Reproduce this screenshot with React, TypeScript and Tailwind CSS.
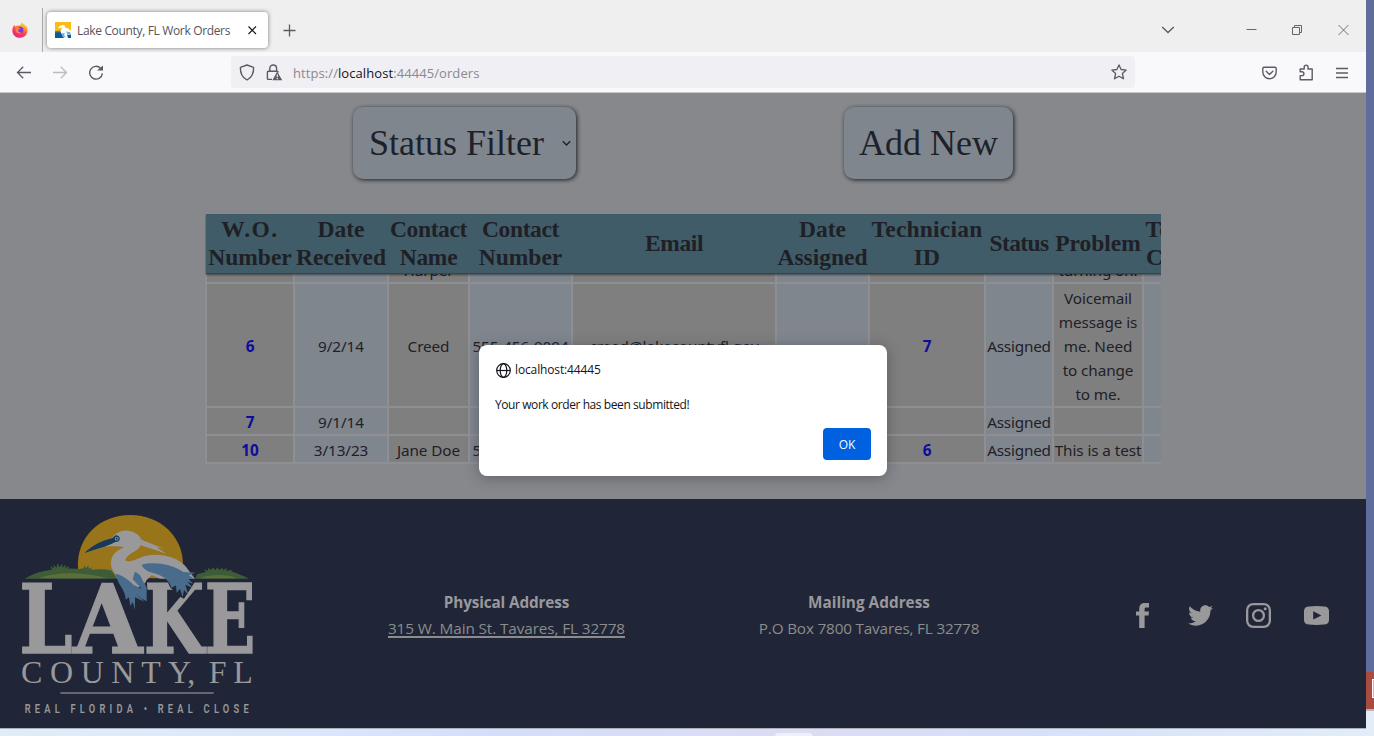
import React from "react";
import { FaTwitter } from "react-icons/fa";

const COLS =
  "grid grid-cols-[86px_92px_79px_101px_202px_91px_114px_66px_88px_114px] gap-x-[2px]";

const headers: { lines: string[]; cls: string }[] = [
  { lines: ["W.O.", "Number"], cls: "" },
  { lines: ["Date", "Received"], cls: "" },
  { lines: ["Contact", "Name"], cls: "tracking-[-0.3px]" },
  { lines: ["Contact", "Number"], cls: "" },
  { lines: ["Email"], cls: "tracking-[-0.4px]" },
  { lines: ["Date", "Assigned"], cls: "" },
  { lines: ["Technician", "ID"], cls: "tracking-[0.2px]" },
  { lines: ["Status"], cls: "tracking-[-0.6px]" },
  { lines: ["Problem"], cls: "" },
  { lines: ["Technician", "Comments"], cls: "tracking-[0.2px]" },
];

const rows = [
  {
    h: "h-[122px]",
    cells: ["6", "9/2/14", "Creed", "555-456-9094", "creed@lakecountyfl.gov", "", "7", "Assigned", "Voicemail message is me. Need to change to me.", ""],
  },
  { h: "h-[26px]", cells: ["7", "9/1/14", "", "", "", "", "", "Assigned", "", ""] },
  { h: "h-[26px]", cells: ["10", "3/13/23", "Jane Doe", "555-555-5555", "", "", "6", "Assigned", "This is a test", ""] },
];

function FirefoxIcon() {
  return (
    <svg width="16" height="16" viewBox="0 0 16 16">
      <defs>
        <linearGradient id="ff" x1="0.8" y1="0" x2="0.3" y2="1">
          <stop offset="0" stopColor="#fff14a" />
          <stop offset="0.3" stopColor="#ffa02a" />
          <stop offset="0.6" stopColor="#ff4050" />
          <stop offset="1" stopColor="#e02090" />
        </linearGradient>
      </defs>
      <path d="M10 0.2 C11 2 13.5 2.6 15 5 C16.6 9 14.8 15.6 8 15.8 C2.6 15.8 0 11.6 .4 7.6 C.6 5.6 1.4 4 2.4 3 L3.2 4.6 C4.6 3.4 6.6 3.2 8.4 3.6 C8.6 2.2 9 1 10 .2 Z" fill="url(#ff)" />
      <circle cx="8.2" cy="8" r="3.2" fill="#7a3be0" />
      <path d="M3.4 5.2 C5 4.6 6.6 5 7.4 6 L8.4 6.4 C7.8 7.2 6.6 7.2 6.2 8 C5.8 9.4 7.6 11 9.8 10.4 C8 12.4 3.6 11.6 3.4 8 Z" fill="#ff8040" />
    </svg>
  );
}

function Favicon() {
  return (
    <svg width="16" height="16" viewBox="0 0 16 16">
      <rect width="16" height="16" fill="#fdbb16" />
      <path d="M0 9.6 L7 9 L8 12 L16 12 V16 H0Z" fill="#0f5a94" />
      <path d="M0 9 L6 8.6 L7 10 L0 10.6Z" fill="#6d8a3a" />
      <path d="M3 6.2 C4 4.6 6 2.6 8.4 3 C10.4 3.6 10.4 5 9.6 6 C12 5.2 14.4 7 16 9 V13 L12 12.4 L13 16 H9 L6 11 C5 9 6 7.4 7.4 5.8 C6 5.4 4.4 5.8 3 6.2Z" fill="#fff" />
      <path d="M7 11 L10 11.4 L9 13 L11 15.4 L7.4 14.4Z M11 9.6 L15 10 L16 13 L12.6 12Z" fill="#69aee0" />
    </svg>
  );
}

function TabBar() {
  return (
    <div className="flex h-[52px] bg-[#efefef]">
      <div className="flex w-[43px] shrink-0 items-start border-r border-[#a9a9a9] pl-3 pt-[14px] mt-2">
        <FirefoxIcon />
      </div>
      <div className="ml-[4px] mt-3 flex h-9 w-[221px] items-center rounded bg-white pl-2 pr-[10px] shadow-[0_0_4px_rgba(0,0,0,0.5)]">
        <Favicon />
        <span className="ml-[6px] mt-px whitespace-nowrap text-[12px] tracking-[-0.34px] text-[#55545c]">Lake County, FL Work Orders</span>
        <svg className="ml-auto" width="11" height="11" viewBox="0 0 11 11" stroke="#15141a" strokeWidth="1.1">
          <path d="M1.5 1.5 L9 9 M9 1.5 L1.5 9" />
        </svg>
      </div>
      <svg className="ml-[15px] mt-6" width="13" height="13" viewBox="0 0 13 13" stroke="#5b5b66" strokeWidth="1.3">
        <path d="M6.5 0.5 V12.5 M0.5 6.5 H12.5" />
      </svg>
      <div className="ml-auto flex items-start pr-[17px] pt-6">
        <svg className="mr-[71px] mt-px" width="14" height="10" viewBox="0 0 14 10" fill="none" stroke="#5b5b66" strokeWidth="1.4">
          <path d="M1.2 2 L7 7.6 L12.8 2" />
        </svg>
        <svg className="mr-[35px]" width="11" height="12" viewBox="0 0 11 12" stroke="#666" strokeWidth="1">
          <path d="M0.5 5.5 H10.5" />
        </svg>
        <svg className="mr-[35px]" width="11" height="12" viewBox="0 0 11 12" fill="none" stroke="#666" strokeWidth="1">
          <path d="M0.5 3.5 H7.5 V10.5 H0.5 Z M2.5 3.5 V1.5 H9.5 V8.5 H7.5" />
        </svg>
        <svg width="11" height="12" viewBox="0 0 11 12" stroke="#666" strokeWidth="0.9">
          <path d="M0.5 1 L10.5 11 M10.5 1 L0.5 11" />
        </svg>
      </div>
    </div>
  );
}

function NavBar() {
  return (
    <div className="flex h-[41px] items-start border-b border-[#c9c9cb] bg-[#f9f9fb] pt-1 text-[#5b5b66]">
      <svg className="ml-4 mt-2" width="16" height="17" viewBox="0 0 16 17" fill="none" stroke="currentColor" strokeWidth="1.3">
        <path d="M15 8.5 H1.6 M7.2 2.8 L1.5 8.5 L7.2 14.2" />
      </svg>
      <svg className="ml-5 mt-2" width="16" height="17" viewBox="0 0 16 17" fill="none" stroke="#bcbbc2" strokeWidth="1.3">
        <path d="M1 8.5 H14.4 M8.8 2.8 L14.5 8.5 L8.8 14.2" />
      </svg>
      <svg className="ml-5 mt-2" width="16" height="17" viewBox="0 0 16 17" fill="none" stroke="currentColor" strokeWidth="1.4">
        <path d="M12.6 4.2 A6.4 6.4 0 1 0 14.4 9.4" />
        <path d="M9 6.4 H15 V1.6 Z" fill="currentColor" stroke="none" />
      </svg>
      <div className="ml-[127px] flex h-8 w-[904px] items-center rounded bg-[#f0eff4] pl-2 pr-2">
        <svg width="16" height="17" viewBox="0 0 16 17" fill="none" stroke="currentColor" strokeWidth="1.4" strokeLinejoin="round">
          <path d="M8 1 L14.6 3.4 C14.8 9 12.4 13.6 8 16 C3.6 13.6 1.2 9 1.4 3.4 Z" />
        </svg>
        <svg className="ml-[11px]" width="17" height="17" viewBox="0 0 17 17" fill="none" stroke="currentColor" strokeWidth="1.4">
          <path d="M3.8 7.2 V4.4 A3.4 3.4 0 0 1 10.6 4.4 V7.2" />
          <path d="M6 15.4 H2.4 Q1.4 15.4 1.4 14.4 V8.2 Q1.4 7.2 2.4 7.2 H11 Q12.2 7.2 12.2 8.4" />
          <path d="M11.2 7.6 L16.2 16.3 H6.4 Z" fill="currentColor" stroke="none" />
          <path d="M11.3 10.6 V13.2 M11.3 14 V15.2" stroke="#f0eff4" strokeWidth="1.2" />
        </svg>
        <span className="ml-[10px] mt-[3px] text-[13px] tracking-[0.08px] text-[#8a8991]">
          https://<span className="text-[#15141a]">localhost</span>:44445/orders
        </span>
        <svg className="ml-auto" width="16" height="16" viewBox="0 0 16 16" fill="none" stroke="currentColor" strokeWidth="1.3" strokeLinejoin="round">
          <path d="M8 0.9 L10.1 5.5 L15.2 6.1 L11.4 9.5 L12.5 14.8 L8 12.2 L3.5 14.8 L4.6 9.5 L0.8 6.1 L5.9 5.5 Z" />
        </svg>
      </div>
      <div className="ml-auto mt-2 mr-[18px] flex items-center">
        <svg className="mr-[22px]" width="15" height="16" viewBox="0 0 15 16" fill="none" stroke="currentColor" strokeWidth="1.4" strokeLinecap="round" strokeLinejoin="round">
          <path d="M2 2.2 H13 Q14.2 2.2 14.2 3.4 V7 A6.7 6.7 0 0 1 0.8 7 V3.4 Q0.8 2.2 2 2.2 Z M4.2 6.2 L7.5 9.4 L10.8 6.2" />
        </svg>
        <svg className="mr-[22px]" width="15" height="17" viewBox="0 0 15 17" fill="none" stroke="currentColor" strokeWidth="1.4" strokeLinejoin="round">
          <path d="M1.2 15.8 V11.6 H3 A1.9 1.9 0 0 0 3 7.8 H1.2 V5 H5.2 V3 A1.9 1.9 0 0 1 9 3 V5 H13.2 V15.8 Z" />
        </svg>
        <svg width="12" height="12" viewBox="0 0 12 12" stroke="currentColor" strokeWidth="1.3">
          <path d="M0 1.5 H12 M0 6 H12 M0 10.5 H12" />
        </svg>
      </div>
    </div>
  );
}

function OrdersTable() {
  return (
    <div className="ml-[205px] mt-[35px] h-[250px] w-[956px] overflow-hidden text-[#1f2026]">
      <div className={`${COLS} relative z-10 ml-px h-[60px] w-max border-b border-[#33454f] bg-[#405c68] pl-px font-['Liberation_Serif'] text-[23.5px] font-bold leading-7 shadow-[0_1px_2px_rgba(0,0,0,0.5)]`}>
        {headers.map((h, i) => (
          <div key={i} className={`flex flex-col items-center justify-center whitespace-nowrap pb-[2px] ${h.cls}`}>
            {h.lines.map((l) => (
              <span key={l} className={l === "W.O." ? "tracking-[1.5px]" : l === "Contact" ? "tracking-[-0.35px]" : ""}>
                {l}
              </span>
            ))}
          </div>
        ))}
      </div>
      <div className="flex w-max flex-col gap-[2px] bg-[#8f8f93] pb-[2px] pl-[2px] text-center text-[15.3px] leading-6 tracking-[-0.1px]">
        <div className={`${COLS} h-2 grid-rows-[8px]`}>
          {headers.map((_, i) => (
            <div key={i} className={`flex items-end justify-center whitespace-nowrap ${i % 2 ? "bg-[#80868e]" : "bg-[#7f7f80]"}`}>
              {i === 2 ? "Harper" : i === 8 ? "turning on." : ""}
            </div>
          ))}
        </div>
        {rows.map((r) => (
          <div key={r.cells[0]} className={`${COLS} ${r.h}`}>
            {r.cells.map((c, i) => (
              <div
                key={i}
                className={`flex items-center justify-center overflow-hidden pt-[2px] ${i === 8 && r.h === "h-[122px]" ? "px-1" : "whitespace-nowrap"} ${i % 2 ? "bg-[#80868e]" : "bg-[#7f7f80]"} ${i === 0 || i === 6 ? "font-bold text-[#0d0c9b]" : ""} ${i === 7 ? "tracking-[-0.2px]" : ""}`}
              >
                {c}
              </div>
            ))}
          </div>
        ))}
      </div>
    </div>
  );
}

function Logo() {
  return (
    <svg className="mt-px shrink-0" width="280" height="228" viewBox="0 0 840 684">
      <path d="M234 208 C228 110 300 45 391 45 C482 45 553 112 549 200 L520 235 H345 L330 212 Z" fill="#98751a" />
      <path d="M74 236 C110 214 150 206 205 206 C225 205 250 209 270 210 C295 206 320 209 333 211 C340 218 346 228 350 236 Z" fill="#3f5c38" />
      <path d="M115 235 C170 215 250 215 322 235 Z" fill="#5a6f3a" />
      <path d="M158 212 L150 198 L162 205 L160 194 L170 203 L172 190 L179 202 L186 191 L188 203 L198 193 L196 204 L208 198 L200 212 Z M247 212 L243 203 L251 206 L252 196 L258 205 L265 196 L266 206 L277 202 L270 212 Z" fill="#3f5c38" />
      <path d="M585 236 L592 223 C620 212 660 208 690 214 C712 220 730 228 746 236 Z" fill="#3f5c38" />
      <path d="M600 235 C630 222 680 222 712 235 Z" fill="#5a6f3a" />
      <path d="M620 218 L612 208 L624 212 L624 204 L634 210 L638 202 L645 210 L653 202 L657 210 L668 203 L669 211 L680 204 L679 212 L698 210 L688 222 Z" fill="#3f5c38" />
      <g fill="#99989b" stroke="#99989b" strokeWidth="5" fontFamily="'DejaVu Serif'" fontWeight="700" fontSize="284">
        <text x="58" y="458" textLength="160" lengthAdjust="spacingAndGlyphs">L</text>
        <text x="219" y="458" textLength="208" lengthAdjust="spacingAndGlyphs">A</text>
        <text x="431" y="458" textLength="181" lengthAdjust="spacingAndGlyphs">K</text>
        <text x="614" y="458" textLength="152" lengthAdjust="spacingAndGlyphs">E</text>
      </g>
      <path d="M342 238 L440 240 L446 310 L425 310 L404 340 L375 310 Z M500 238 L590 238 L552 296 L540 290 L510 262 Z" fill="#202637" />
      <path d="M327 130 C340 98 365 88 385 92 C410 96 422 110 424 120 L497 160 L440 142 L422 136 C416 155 380 160 376 180 C385 192 410 176 435 168 C480 158 530 170 556 198 L585 236 H480 L455 226 L440 240 L435 250 L415 262 C380 262 350 235 335 205 C328 175 340 155 372 142 C355 138 340 138 318 140 Z" fill="#99989b" />
      <path d="M421 118 L492 146 L470 142 L498 161 L440 138 Z" fill="#99989b" />
      <path d="M254 159 C275 138 305 122 336 115 L348 105 C362 110 360 124 346 126 L334 132 C310 142 280 150 254 159 Z" fill="#153a5c" />
      <circle cx="350" cy="116" r="9" fill="#153a5c" />
      <circle cx="350" cy="116" r="5.5" fill="#99989b" />
      <circle cx="350" cy="116" r="3.2" fill="#153a5c" />
      <path d="M347 221 C365 224 385 238 400 254 L425 266 L398 238 L404 216 C414 218 424 228 428 242 L440 262 V304 L425 296 L405 280 L434 306 L405 292 V330 L398 306 L391 318 L387 292 L377 299 C378 270 350 250 347 221 Z" fill="#4a6c8c" />
      <path d="M425 194 C465 184 515 192 550 216 L587 218 L566 226 L582 236 L565 236 L580 252 L562 245 L579 264 L556 254 L565 284 L552 270 L548 292 L540 266 L530 278 L528 256 L514 264 C508 240 490 228 462 220 C440 214 428 204 425 194 Z" fill="#4a6c8c" />
      <text x="63 150 242 334 424 504 562 600 626 700" y="550" fill="#99989b" fontFamily="'Liberation Serif'" fontSize="96">COUNTY, FL</text>
      <rect x="181" y="577" width="460" height="4" fill="#86868c" />
      <g transform="translate(74 639) scale(0.68 1)">
        <text x="0" y="0" fill="#99989b" fontFamily="Roboto" fontWeight="600" fontSize="41" letterSpacing="18.7">REAL FLORIDA • REAL CLOSE</text>
      </g>
    </svg>
  );
}

function Footer() {
  return (
    <footer className="flex h-[229px] bg-[#202637] text-[#8c8c8d]">
      <Logo />
      <div className="mt-[90px] ml-[76px] w-[301px] text-center text-[15.3px] leading-[26px]">
        <div className="font-bold tracking-[-0.13px] text-[#99989b]">Physical Address</div>
        <div className="whitespace-nowrap tracking-[-0.1px] underline decoration-2 underline-offset-2">315 W. Main St. Tavares, FL 32778</div>
      </div>
      <div className="mt-[90px] ml-[62px] w-[300px] text-center text-[15.3px] leading-[26px]">
        <div className="font-bold tracking-[0.03px] text-[#99989b]">Mailing Address</div>
        <div className="whitespace-nowrap tracking-[-0.18px]">P.O Box 7800 Tavares, FL 32778</div>
      </div>
      <div className="ml-auto mr-[37px] mt-[104px] flex h-[25px] items-center text-[#99989b]">
        <svg className="mr-[39px]" width="13" height="25" viewBox="0 0 13 25" fill="currentColor">
          <path d="M13 0 V4.6 H10 Q8.6 4.6 8.6 6 V8.4 H13 L12.5 12.6 H8.6 V25 H3.2 V12.6 H0 V8.4 H3.2 V5.6 Q3.2 0 8.8 0 Z" />
        </svg>
        <FaTwitter size={25} className="mr-[33px]" />
        <svg className="mr-[33px]" width="25" height="25" viewBox="0 0 25 25" fill="none" stroke="currentColor" strokeWidth="2.3">
          <rect x="1.15" y="1.15" width="22.7" height="22.7" rx="6" />
          <circle cx="12.5" cy="12.5" r="5.4" />
          <circle cx="19.2" cy="5.8" r="1.5" fill="currentColor" stroke="none" />
        </svg>
        <svg width="25" height="19" viewBox="0 0 25 19">
          <path fillRule="evenodd" fill="currentColor" d="M5 0.4 Q12.5 -0.4 20 0.4 Q25 0.6 25 5 V14 Q25 18.4 20 18.6 Q12.5 19.4 5 18.6 Q0 18.4 0 14 V5 Q0 0.6 5 0.4 Z M9.2 5.2 V13.6 L17.4 9.4 Z" />
        </svg>
      </div>
    </footer>
  );
}

function Alert() {
  return (
    <div className="absolute left-[479px] top-[345px] z-20 flex h-[131px] w-[408px] flex-col rounded-lg bg-white px-4 pt-4 text-[12px] text-[#15141a] shadow-[0_2px_14px_rgba(30,30,40,0.35)]">
      <div className="flex h-[18px] items-center">
        <svg className="ml-px" width="15" height="15" viewBox="0 0 15 15" fill="none" stroke="#15141a" strokeWidth="1.2">
          <circle cx="7.5" cy="7.5" r="6.8" />
          <ellipse cx="7.5" cy="7.5" rx="3.3" ry="6.8" />
          <path d="M0.8 7.5 H14.2" />
        </svg>
        <span className="ml-1 font-medium tracking-[-0.13px]">localhost:44445</span>
      </div>
      <p className="mt-[17px] leading-[18px] tracking-[-0.42px]">Your work order has been submitted!</p>
      <button className="ml-auto mt-[14px] flex h-8 w-12 items-center justify-center rounded bg-[#0061e0] pt-[2px] text-[#fbfbfe]">OK</button>
    </div>
  );
}

export default function App() {
  return (
    <div className="relative flex h-[736px] w-[1374px] flex-col overflow-hidden bg-[linear-gradient(90deg,#e0edf8_0%,#dbe7fa_22%,#d4defa_36%,#dcdcf2_58%,#d6e0f8_75%,#e2edf8_100%)] font-['Open_Sans','Noto_Sans',sans-serif]">
      <div className="flex h-[728px]">
        <div className="w-[1366px]">
          <TabBar />
          <NavBar />
          <main className="h-[406px] bg-[#87888c] pt-[14px] font-['Noto_Sans',sans-serif]">
            <div className="flex font-['Liberation_Serif'] text-[36px] text-[#1d212a]">
              <div className="ml-[353px] flex h-[72px] w-[223px] items-center rounded-[10px] bg-[#80868e] pl-4 pr-[5px] shadow-[1px_1px_4px_rgba(20,20,24,0.9)]">
                <span className="whitespace-nowrap">Status Filter</span>
                <svg className="ml-auto mt-px" width="9" height="7" viewBox="0 0 9 7" fill="none" stroke="#1d212a" strokeWidth="1.4">
                  <path d="M0.8 1.2 L4.5 5 L8.2 1.2" />
                </svg>
              </div>
              <div className="ml-[268px] flex h-[72px] w-[169px] items-center justify-center whitespace-nowrap rounded-[10px] bg-[#80868e] shadow-[1px_1px_4px_rgba(20,20,24,0.9)]">
                Add New
              </div>
            </div>
            <OrdersTable />
          </main>
          <Footer />
        </div>
        <div className="flex w-2 flex-col bg-[#e3edf8]">
          <div className="h-[672px] bg-[#5f6d9c]" />
          <div className="flex h-[37px] justify-end bg-[#a84c41] pt-[7px]">
            <div className="h-[19px] w-[2px] border-y border-l border-white bg-[#d8b0aa]" />
          </div>
          <div className="h-[2px] bg-[#b4b8c0]" />
        </div>
      </div>
      <div className="flex w-[1366px] border-t border-[#a9afbb] pl-[775px] pt-[4px]">
        <div className="h-4 w-[38px] rounded-t bg-[#eef0fa]" />
      </div>
      <Alert />
    </div>
  );
}
